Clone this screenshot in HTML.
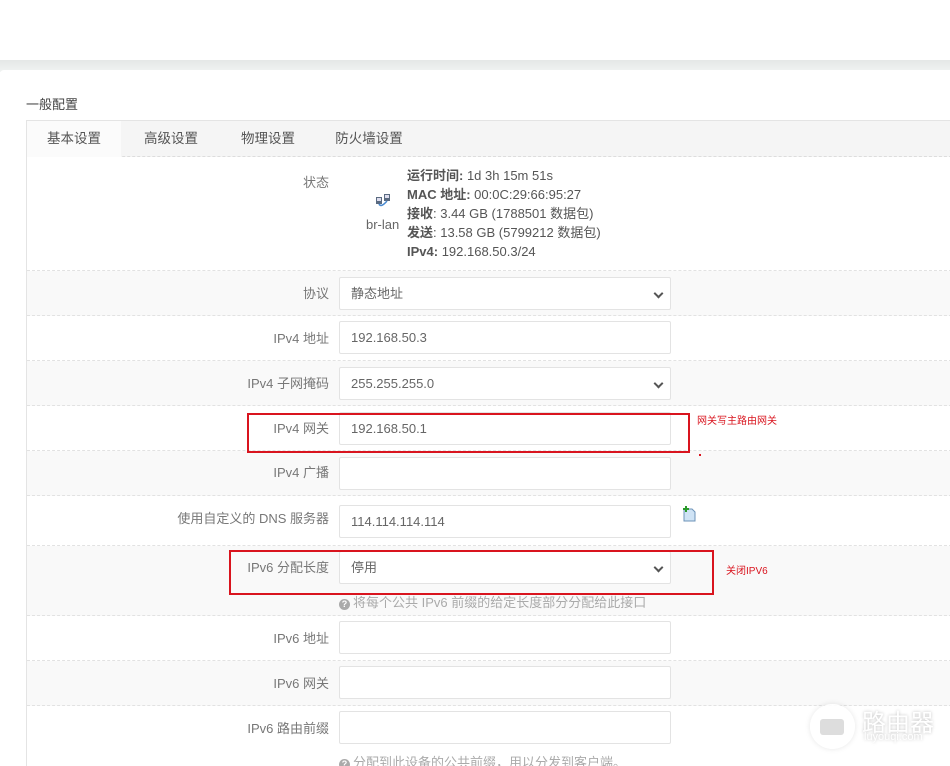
<!DOCTYPE html>
<html><head><meta charset="utf-8"><style>
*{box-sizing:border-box;margin:0;padding:0}
html,body{width:950px;height:766px;overflow:hidden}
body{background:#fff;font-family:"Liberation Sans","Noto Sans CJK SC",sans-serif;font-size:13px;color:#555;position:relative}
.top{position:absolute;left:0;top:0;width:950px;height:60px;background:#fff}
.band{position:absolute;left:0;top:60px;width:950px;height:12px;background:linear-gradient(#e4e7e6,#f1f3f2)}
.card{position:absolute;left:0;top:70px;width:950px;height:700px;background:#fff;border-radius:4px 0 0 0}
.title{position:absolute;left:26px;top:94px;font-size:13px;color:#444}
.box{position:absolute;left:26px;top:120px;width:930px;height:660px;border:1px solid #e4e4e4}
.tabs{position:absolute;left:27px;top:121px;width:930px;height:36px;background:#f5f5f5;border-bottom:1px dashed #ddd}
.tab{position:absolute;top:0;height:36px;line-height:36px;font-size:13.5px;color:#555;text-align:center}
.row{position:absolute;left:27px;width:930px;border-bottom:1px dashed #e2e2e2}
.alt{background:#f9f9f9}
.lab{position:absolute;right:628px;text-align:right;color:#777;white-space:nowrap}
.inp{position:absolute;left:312px;width:332px;height:33px;border:1px solid #e3e3e3;background:#fff;border-radius:2px;padding-left:11px;line-height:31px;color:#666}
.chev{position:absolute;right:8px;top:12px;width:7px;height:7px;border-right:2px solid #555;border-bottom:2px solid #555;transform:rotate(45deg)}
.help{position:absolute;left:312px;color:#aaa;font-size:13px}
.help b{display:inline-block;width:11px;height:11px;border-radius:50%;background:#aaa;color:#fff;font-size:9px;line-height:11px;text-align:center;margin-right:3px;vertical-align:0}
.red{position:absolute;border:2px solid #d9141e}
.note{position:absolute;color:#d9141e;font-size:10px}
</style></head><body>
<div class="top"></div><div class="band"></div>
<div class="card"></div>
<div class="title">一般配置</div>
<div class="box"></div>
<div class="tabs">
<div class="tab" style="left:0;width:94px;background:#fbfbfb">基本设置</div>
<div class="tab" style="left:94px;width:100px">高级设置</div>
<div class="tab" style="left:194px;width:94px">物理设置</div>
<div class="tab" style="left:288px;width:108px">防火墙设置</div>
</div>

<div class="row" style="top:158px;height:113px">
<div class="lab" style="top:14px">状态</div>
<svg style="position:absolute;left:348px;top:35px" width="18" height="16" viewBox="0 0 18 16"><rect x="1" y="4" width="6" height="7" fill="#5a6a80"/><rect x="9" y="1" width="6" height="7" fill="#5a6a80"/><rect x="2" y="5" width="4" height="3" fill="#dde"/><rect x="10" y="2" width="4" height="3" fill="#dde"/><path d="M4 11 Q6 15 12 8" stroke="#4a8ad0" stroke-width="1.5" fill="none"/></svg>
<div style="position:absolute;left:339px;top:59px;color:#666">br-lan</div>
<div style="position:absolute;left:380px;top:8px;line-height:19px;color:#555">
<b>运行时间:</b> 1d 3h 15m 51s<br><b>MAC 地址:</b> 00:0C:29:66:95:27<br><b>接收</b>: 3.44 GB (1788501 数据包)<br><b>发送</b>: 13.58 GB (5799212 数据包)<br><b>IPv4:</b> 192.168.50.3/24</div>
</div>
<div class="row alt" style="top:271px;height:45px"><div class="lab" style="top:12px">协议</div><div class="inp" style="top:6px">静态地址<i class="chev"></i></div></div>
<div class="row" style="top:316px;height:45px"><div class="lab" style="top:12px">IPv4 地址</div><div class="inp" style="top:5px">192.168.50.3</div></div>
<div class="row alt" style="top:361px;height:45px"><div class="lab" style="top:12px">IPv4 子网掩码</div><div class="inp" style="top:6px">255.255.255.0<i class="chev"></i></div></div>
<div class="row" style="top:406px;height:45px"><div class="lab" style="top:12px">IPv4 网关</div><div class="inp" style="top:6px">192.168.50.1</div></div>
<div class="row alt" style="top:451px;height:45px"><div class="lab" style="top:11px">IPv4 广播</div><div class="inp" style="top:6px"></div></div>
<div class="row" style="top:496px;height:50px"><div class="lab" style="top:12px">使用自定义的 DNS 服务器</div><div class="inp" style="top:9px">114.114.114.114</div>
<svg style="position:absolute;left:655px;top:10px" width="14" height="16" viewBox="0 0 14 16"><path d="M2 3h8l3 3v9H2z" fill="#cfe3f5" stroke="#6d93b8"/><path d="M4 0v6M1 3h6" stroke="#2a9a2a" stroke-width="2"/></svg></div>
<div class="row alt" style="top:546px;height:70px"><div class="lab" style="top:11px">IPv6 分配长度</div><div class="inp" style="top:5px">停用<i class="chev"></i></div><div class="help" style="top:46px"><b>?</b>将每个公共 IPv6 前缀的给定长度部分分配给此接口</div></div>
<div class="row" style="top:616px;height:45px"><div class="lab" style="top:12px">IPv6 地址</div><div class="inp" style="top:5px"></div></div>
<div class="row alt" style="top:661px;height:45px"><div class="lab" style="top:12px">IPv6 网关</div><div class="inp" style="top:5px"></div></div>
<div class="row" style="top:706px;height:70px;border:none"><div class="lab" style="top:12px">IPv6 路由前缀</div><div class="inp" style="top:5px"></div><div class="help" style="top:46px"><b>?</b>分配到此设备的公共前缀，用以分发到客户端。</div></div>

<div class="red" style="left:247px;top:413px;width:443px;height:40px"></div>
<div class="note" style="left:697px;top:412px">网关写主路由网关</div>
<div style="position:absolute;left:699px;top:454px;width:2px;height:2px;background:#d9141e"></div>
<div class="red" style="left:229px;top:550px;width:485px;height:45px"></div>
<div class="note" style="left:726px;top:562px">关闭IPV6</div>

<div style="position:absolute;left:810px;top:704px;width:45px;height:45px;border-radius:50%;background:rgba(255,255,255,.9);box-shadow:0 0 6px rgba(0,0,0,.1)"></div>
<div style="position:absolute;left:820px;top:719px;width:24px;height:16px;border-radius:3px;background:#ddd"></div>
<div style="position:absolute;left:862px;top:703px;font-size:24px;color:#fff;text-shadow:0 0 3px rgba(0,0,0,.25)">路由器</div>
<div style="position:absolute;left:864px;top:731px;font-size:11px;color:#fff;text-shadow:0 0 3px rgba(0,0,0,.25)">luyouqi.com</div>
</body></html>
